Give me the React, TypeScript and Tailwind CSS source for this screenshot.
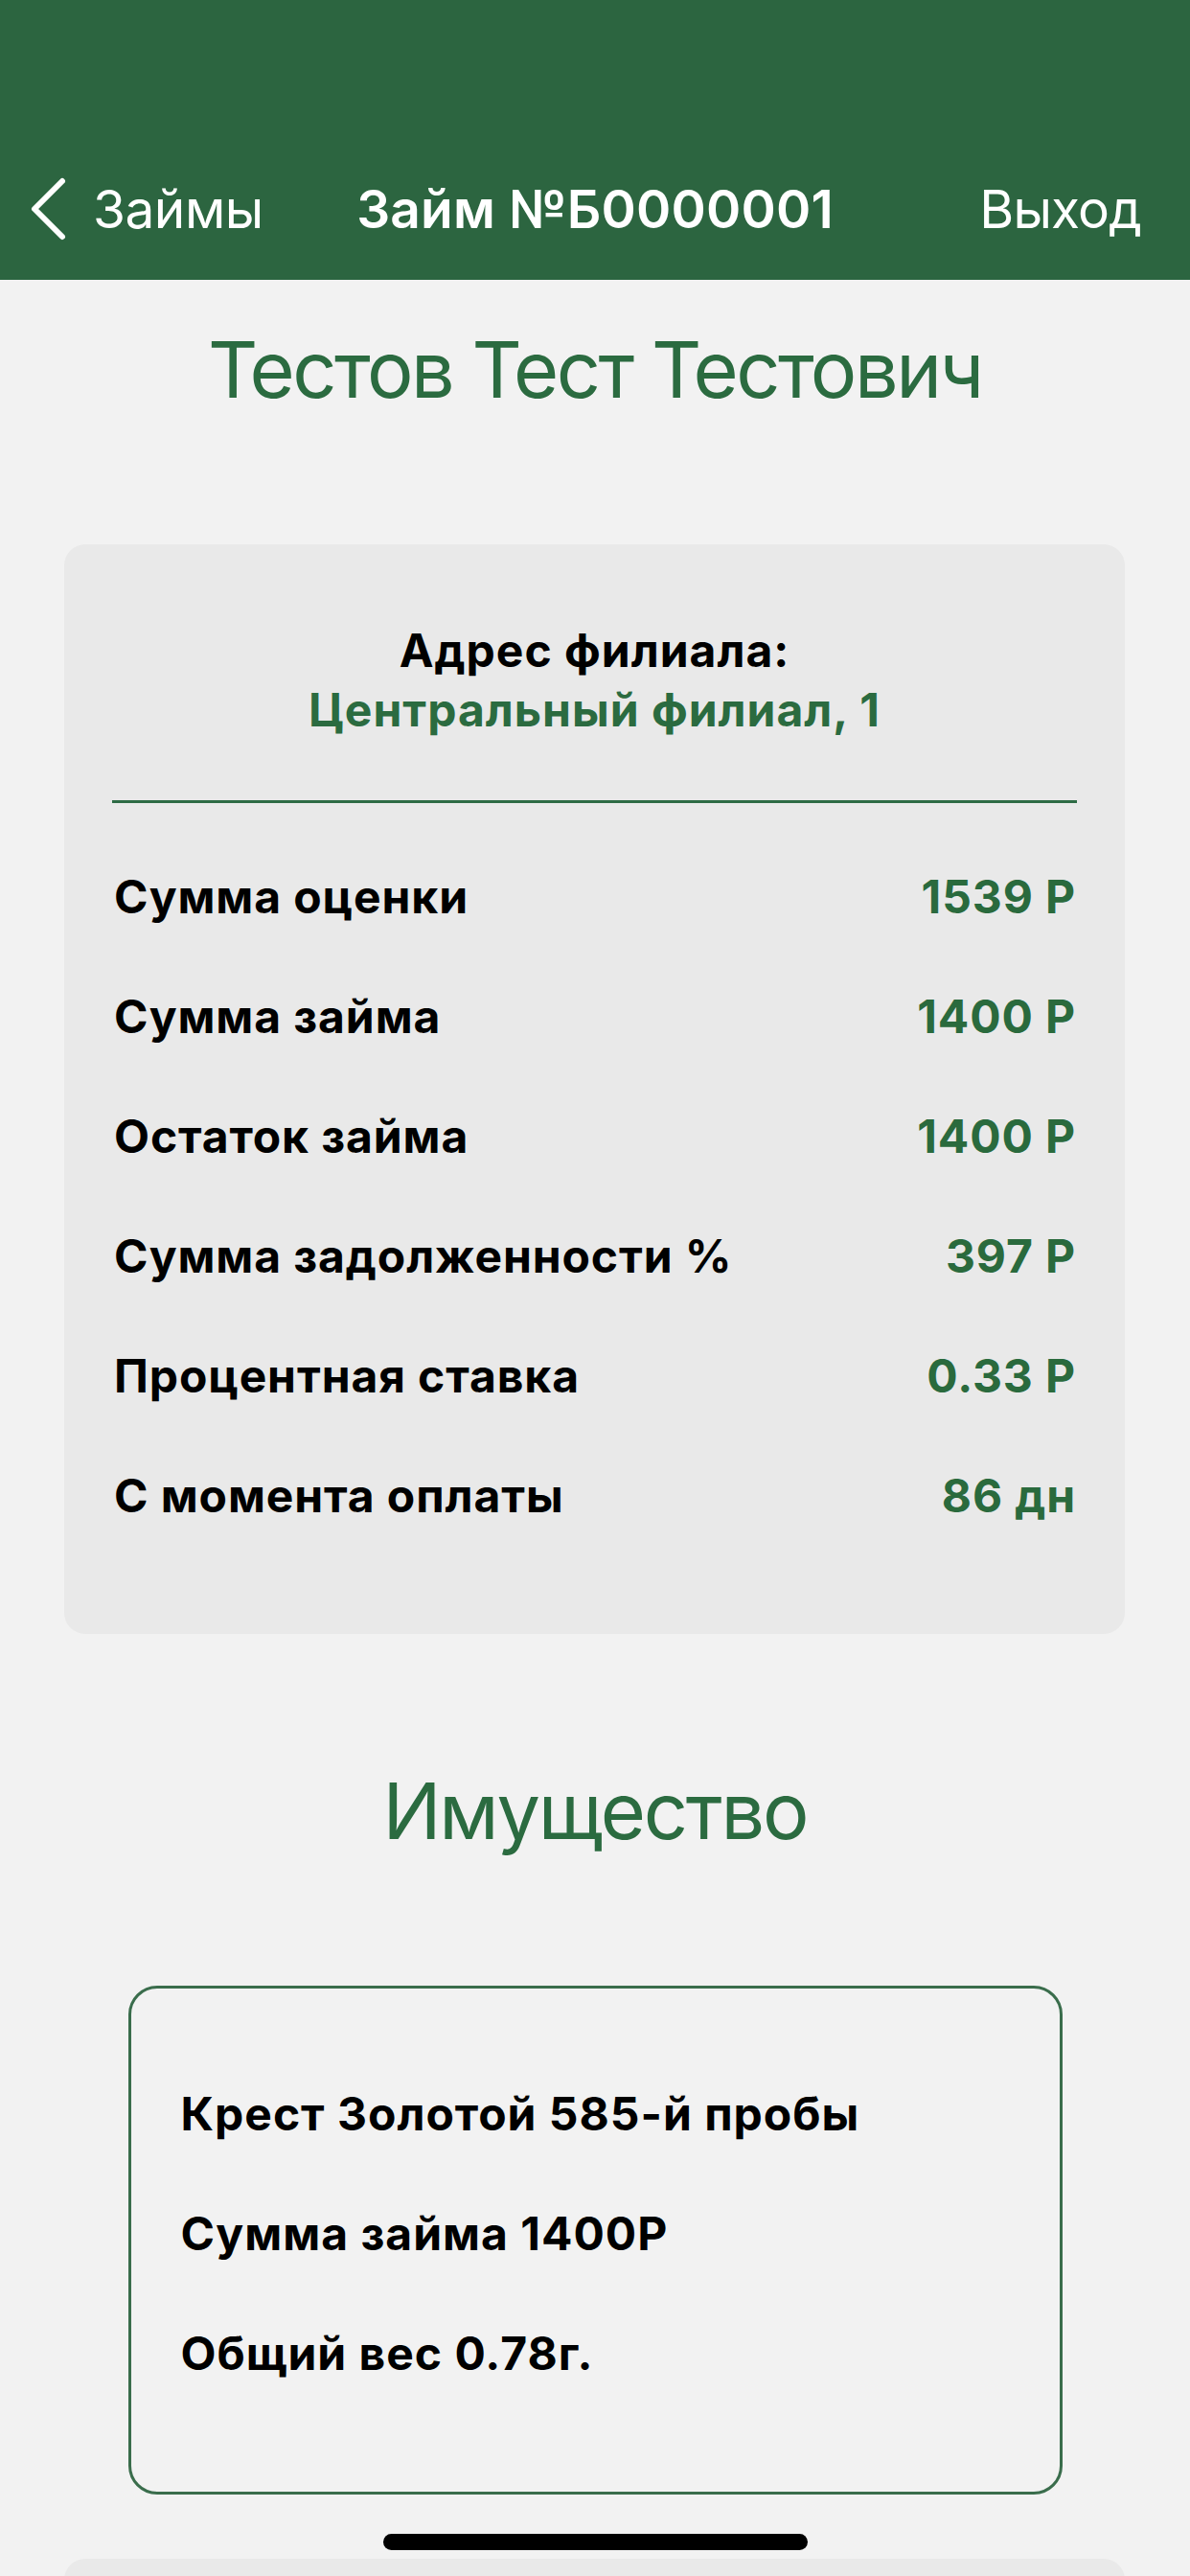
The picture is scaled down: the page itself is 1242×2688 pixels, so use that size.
import React from "react";

const rows: [string, string][] = [
  ["Сумма оценки", "1539 Р"],
  ["Сумма займа", "1400 Р"],
  ["Остаток займа", "1400 Р"],
  ["Сумма задолженности %", "397 Р"],
  ["Процентная ставка", "0.33 Р"],
  ["С момента оплаты", "86 дн"],
];

const items = ["Крест Золотой 585-й пробы", "Сумма займа 1400Р", "Общий вес 0.78г."];

export default function App() {
  return (
    <div
      className="relative h-[2688px] w-[1242px] overflow-hidden bg-[#f2f2f2]"
      style={{ fontFamily: "Inter, 'Noto Sans', sans-serif" }}
    >
      {/* Header */}
      <header className="h-[292px] bg-[#2c6540] pt-[176px]">
        <div className="grid h-[84px] grid-cols-[1fr_auto_1fr] items-center text-white">
          <div className="flex items-center pl-[30px]">
            <svg width="40" height="68" viewBox="0 0 40 68" fill="none">
              <path d="M35 5 L6 34 L35 63" stroke="white" strokeWidth="6" strokeLinecap="round" strokeLinejoin="round" />
            </svg>
            <span className="ml-[27px] text-[55px] leading-none font-normal tracking-[-0.5px]">Займы</span>
          </div>
          <div className="text-[55px] leading-none font-semibold tracking-[0.2px]">Займ №Б0000001</div>
          <div className="flex justify-end pr-[51px]">
            <span className="text-[55px] leading-none font-normal tracking-[-0.8px]">Выход</span>
          </div>
        </div>
      </header>

      {/* Name */}
      <h1 className="pt-[44px] text-center text-[81px] leading-[100px] font-normal tracking-[-2.5px] text-[#2b6b40]">
        Тестов Тест Тестович
      </h1>

      {/* Loan card */}
      <section className="mx-[67px] mt-[132px] w-[1107px] rounded-[22px] bg-[#e9e9e9] pt-[80px] pb-[82px]">
        <div className="text-center text-[48px] font-bold leading-[62px] tracking-[1px]">
          <div className="text-black">Адрес филиала:</div>
          <div className="text-[#2b6b40]">Центральный филиал, 1</div>
        </div>
        <div className="mx-[50px] mt-[63px] h-[3px] bg-[#2e6b45]" />
        <div className="mt-[35px] px-[52px]">
          {rows.map(([label, value]) => (
            <div
              key={label}
              className="flex h-[125px] items-center justify-between text-[48px] font-bold tracking-[0.9px]"
            >
              <span className="text-black">{label}</span>
              <span className="-mr-[1px] text-[#2a6a3d]">{value}</span>
            </div>
          ))}
        </div>
      </section>

      {/* Property */}
      <h2 className="mt-[135px] text-center text-[81px] leading-[100px] font-normal tracking-[-2.2px] text-[#2b6b40]">
        Имущество
      </h2>

      <section className="mx-auto mt-[132px] w-[975px] rounded-[30px] border-[3px] border-[#3a6d4c] pt-[68px] pb-[82px] pl-[52px]">
        {items.map((t) => (
          <div key={t} className="flex h-[125px] items-center text-[48px] font-bold tracking-[1px] text-black">
            {t}
          </div>
        ))}
      </section>

      <section className="mx-[67px] mt-[67px] h-[300px] w-[1107px] rounded-[22px] bg-[#e9e9e9]" />

      {/* Home indicator */}
      <div className="absolute bottom-[27px] left-[400px] h-[17px] w-[443px] rounded-full bg-black" />
    </div>
  );
}
